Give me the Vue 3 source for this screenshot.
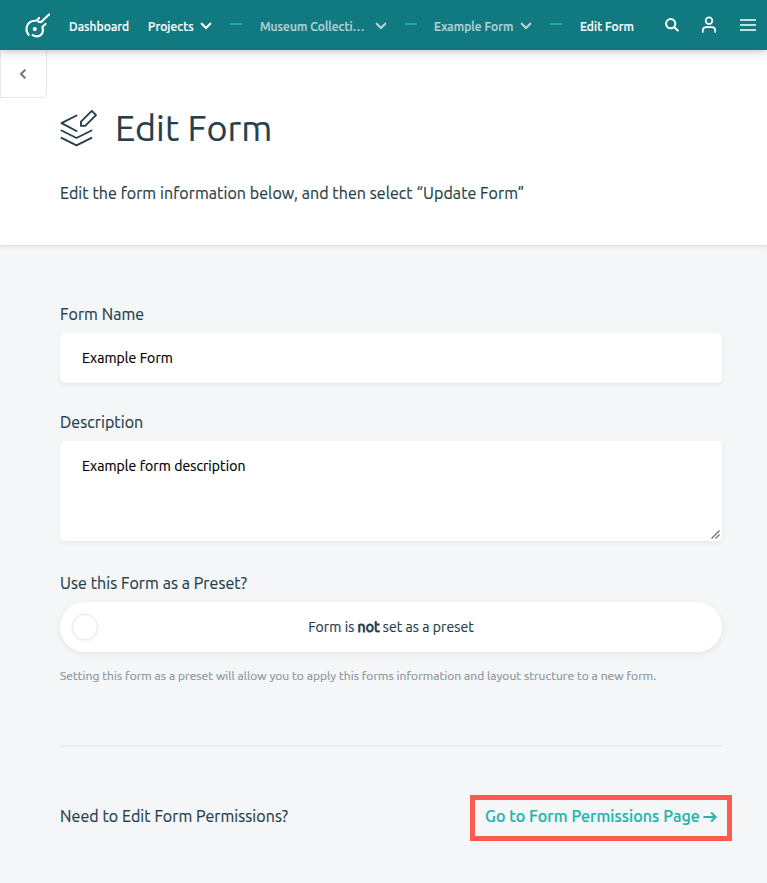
<script setup>
import { ref } from 'vue'

const name = ref('Example Form')
const description = ref('Example form description')
</script>

<template>
  <div class="page">
    <header class="topbar">
      <svg class="logo" viewBox="0 0 28 28" fill="none" stroke="#fff" stroke-width="2.100" stroke-linecap="round" stroke-linejoin="round">
        <path d="M4.700 23.800C.3 18.500 2.800 10 11 9.800C13 9.700 14.200 8.600 15 6.900" />
        <path d="M25 3.400L17.200 11.100L14.300 10.700" />
        <path d="M21.500 12.900L18.300 15.900C20.300 20.800 17.700 25.400 12.600 25.400C10.800 25.400 9.500 24.900 8.600 24" />
        <circle cx="10.800" cy="18.100" r="2.100" fill="#fff" stroke="none" />
      </svg>
      <nav class="crumbs">
        <a class="crumb dashboard">Dashboard</a>
        <a class="crumb projects">Projects</a>
        <svg class="chevron" viewBox="0 0 12 8"><path d="M1.700 1.700L6 6L10.300 1.700" /></svg>
        <span class="dash dash-a"></span>
        <a class="crumb faded museum">Museum Collecti…</a>
        <svg class="chevron faded" viewBox="0 0 12 8"><path d="M1.700 1.700L6 6L10.300 1.700" /></svg>
        <span class="dash dash-b"></span>
        <a class="crumb faded example">Example Form</a>
        <svg class="chevron faded" viewBox="0 0 12 8"><path d="M1.700 1.700L6 6L10.300 1.700" /></svg>
        <span class="dash dash-c"></span>
        <a class="crumb current">Edit Form</a>
      </nav>
      <div class="tools">
        <svg class="search" viewBox="0 0 14 14" fill="none" stroke="#fff" stroke-width="2" stroke-linecap="round"><circle cx="5.700" cy="5.700" r="4.600" /><path d="M9.300 9.300L12.800 12.600" /></svg>
        <svg class="user" viewBox="0 0 16 18" fill="none" stroke="#fff" stroke-width="1.700" stroke-linecap="round"><circle cx="8" cy="4.700" r="3.300" /><path d="M1.800 16V14.800Q1.800 11.200 5.400 11.200H10.600Q14.200 11.200 14.200 14.800V16" /></svg>
        <svg class="burger" viewBox="0 0 16 12" stroke="#fff" stroke-width="1.600"><path d="M0 1H16M0 6H16M0 11H16" /></svg>
      </div>
    </header>

    <section class="hero">
      <button class="back" aria-label="Back">
        <svg viewBox="0 0 8 10" fill="none" stroke="#66757b" stroke-width="2"><path d="M6.300 .8L2 5L6.300 9.200" /></svg>
      </button>
      <div class="heading">
        <svg class="form-icon" viewBox="0 0 38 38" fill="none" stroke="#263f4a" stroke-width="1.900" stroke-linecap="round" stroke-linejoin="round">
          <path d="M16.500 6.500L1.500 14.200L16.500 22" />
          <path d="M1.500 21.500L16.500 29L31.500 21.500" />
          <path d="M1.500 28.800L16.500 36.300L31.500 28.800" />
          <path d="M21 16.900V12.700L31.800 1.900L36 6.100L25.200 16.900Z" />
        </svg>
        <h1>Edit Form</h1>
      </div>
      <p class="intro">Edit the form information below, and then select “Update Form”</p>
    </section>

    <main class="content">
      <label class="label name-label">Form Name</label>
      <input v-model="name" class="field name-field" />
      <label class="label description-label">Description</label>
      <div class="description">
        <textarea v-model="description" class="field description-field"></textarea>
        <svg class="grip" viewBox="0 0 9 9" fill="none" stroke="#707070" stroke-width="1.200"><path d="M.5 8.500L8.500 .5M4.500 8.500L8.500 4.500" /></svg>
      </div>
      <label class="label preset-label">Use this Form as a Preset?</label>
      <div class="toggle">
        <span class="knob"></span>
        <span class="state">Form is <b>not</b> set as a preset</span>
      </div>
      <p class="hint">Setting this form as a preset will allow you to apply this forms information and layout structure to a new form.</p>
      <hr />
      <div class="permissions">
        <span class="question">Need to Edit Form Permissions?</span>
        <a class="link">
          <span class="link-text">Go to Form Permissions Page</span>
          <svg viewBox="0 0 14 12" fill="none" stroke="#1fb5ad" stroke-width="2"><path d="M.5 6H12.500M8.200 1.500L12.700 6L8.200 10.500" /></svg>
        </a>
      </div>
    </main>
  </div>
</template>

<style>
body { background: #f4f6f8; }
</style>

<style scoped>
* { box-sizing: border-box; }
.page {
  width: 767px;
  height: 883px;
  overflow: hidden;
  background: #f4f6f8;
  color: #263f4a;
  font-family: Ubuntu, "Noto Sans", sans-serif;
  font-size: 16px;
  letter-spacing: .075px;
  -webkit-text-stroke: .2px currentColor;
  white-space: nowrap;
}
.topbar {
  position: relative;
  z-index: 2;
  display: flex;
  align-items: center;
  height: 50px;
  padding: 0 11px 0 24px;
  background: #117a80;
  box-shadow: 0 2px 8px rgba(20, 40, 50, .25);
}
.logo { width: 28px; height: 28px; flex: none; margin-bottom: 1px; }
.crumbs { display: flex; align-items: center; margin-left: 17px; padding-top: 2px; }
.crumb { padding-top: 1px; font-size: 12px; line-height: 20px; font-weight: 500; color: #fff; flex: none; }
.dashboard { width: 79px; }
.projects { width: 52px; }
.museum { width: 115px; }
.example { width: 86px; }
.faded { opacity: .68; }
.chevron { width: 12px; height: 8px; flex: none; fill: none; stroke: #fff; stroke-width: 2.200; stroke-linecap: round; }
.dash { width: 12px; height: 2px; flex: none; background: #1fa9a4; }
.dash-a { margin: 0 18px 5px; }
.dash-b { margin: 0 17px 5px 18px; }
.dash-c { margin: 0 18px 5px; }
.tools { display: flex; align-items: center; margin-left: auto; }
.search { width: 14px; height: 14px; margin-right: 22px; }
.user { width: 16px; height: 18px; margin-right: 23px; }
.burger { width: 16px; height: 12px; }
.hero {
  height: 195px;
  background: #fff;
  box-shadow: 0 1px 4px rgba(20, 40, 50, .13);
}
.back {
  display: grid;
  place-items: center;
  width: 47px;
  height: 48px;
  padding: 0 1px 0 0;
  border: 1px solid #e5e8ea;
  border-top: 0;
  border-radius: 0 0 5px 0;
  background: #fff;
}
.back svg { width: 8px; height: 10px; }
.heading { display: flex; align-items: center; height: 60px; padding-left: 60px; }
.form-icon { width: 38px; height: 38px; }
h1 { margin: 0 0 0 17px; font-size: 36px; line-height: 48px; font-weight: 400; }
.intro { margin: 23px 0 0 60px; line-height: 24px; }
.content { width: 722px; padding: 57px 0 0 60px; }
.label { display: block; line-height: 24px; }
.field {
  display: block;
  width: 662px;
  border: 0;
  border-radius: 5px;
  background: #fff;
  box-shadow: 0 2px 4px rgba(20, 40, 50, .06);
  color: #000;
  font: 14px/20px Ubuntu, "Noto Sans", sans-serif;
  letter-spacing: .075px;
}
.name-field { height: 50px; margin: 7px 0 27px; padding: 0 22px; }
.description { position: relative; margin: 7px 0 30px; }
.description-field { height: 100px; padding: 15px 22px; resize: none; }
.grip { position: absolute; right: 2px; bottom: 2px; width: 9px; height: 9px; }
.toggle {
  display: flex;
  align-items: center;
  height: 50px;
  margin-top: 7px;
  padding: 0 12px;
  border-radius: 25px;
  background: #fff;
  box-shadow: 0 2px 6px rgba(20, 40, 50, .07);
  font-size: 14px;
}
.knob {
  width: 26px;
  height: 26px;
  border: 1px solid #e5e7e9;
  border-radius: 50%;
  box-shadow: 0 1px 3px rgba(20, 40, 50, .08);
}
.state { flex: 1; margin-right: 26px; text-align: center; }
.state b { font-weight: 400; -webkit-text-stroke: .9px currentColor; }
.hint { margin: 15px 0 0; font-size: 12px; line-height: 18px; letter-spacing: .065px; color: #89969c; }
hr { height: 2px; margin: 60px 0 0; border: 0; background: #e9ebed; }
.permissions { display: flex; align-items: flex-start; justify-content: space-between; padding-top: 48px; }
.question { margin-top: 9px; line-height: 24px; }
.link {
  display: flex;
  align-items: center;
  flex: none;
  width: 262px;
  height: 46px;
  margin-right: -10px;
  padding: 0 10px 4px 10px;
  border: 5px solid #ff5a4f;
  color: #1fb5ad;
  font-weight: 500;
}
.link-text { flex: 1; }
.link svg { width: 14px; height: 12px; margin-top: 2px; }
</style>
